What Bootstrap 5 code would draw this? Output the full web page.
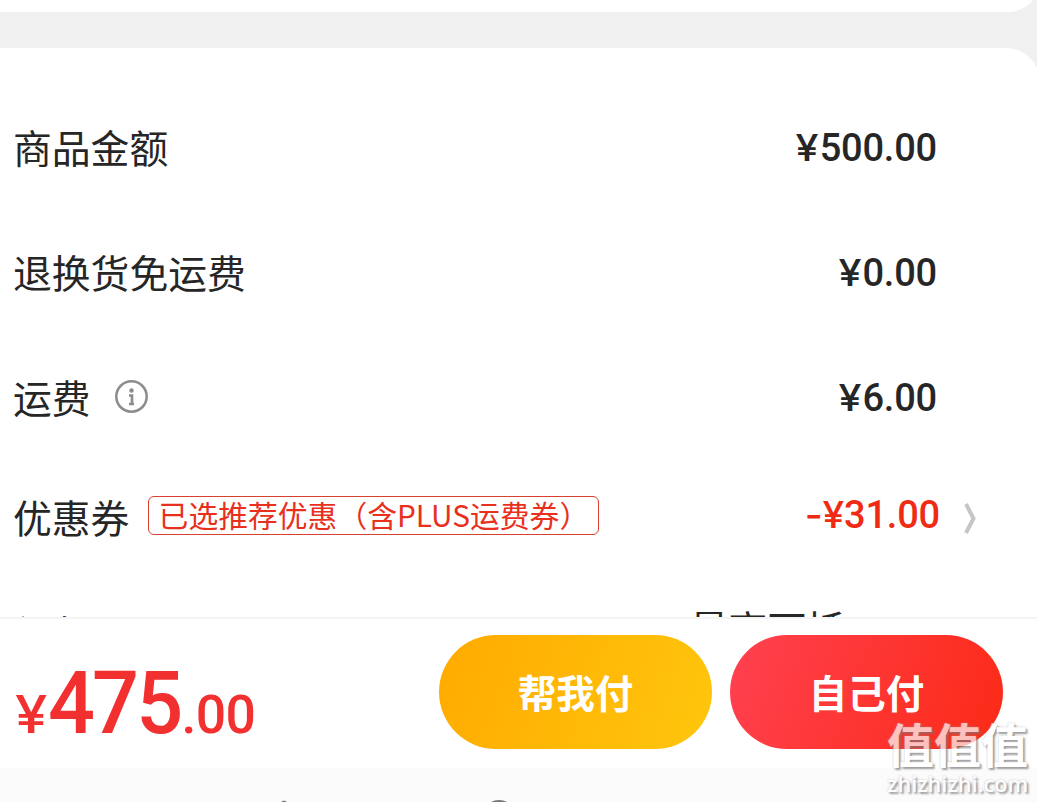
<!DOCTYPE html>
<html lang="zh-CN">
  <head>
    <meta charset="UTF-8" />
    <meta name="viewport" content="width=device-width, initial-scale=1.0" />
    <title>结算</title>
    <link
      href="https://cdn.jsdelivr.net/npm/bootstrap@5.3.0/dist/css/bootstrap.min.css"
      rel="stylesheet"
    />
    <style>
      body {
        height: 802px;
        background: #f0f0f0;
        color: #262626;
        font-family: "Noto Sans CJK SC", sans-serif;
        font-size: 38.8px;
        line-height: 1;
      }
      .panel-prev {
        height: 48px;
        margin: -36px -3px 36px 0;
        border-bottom-right-radius: 32px;
      }
      .panel-bill {
        height: 569px;
        margin-right: -3px;
        padding: 38px 103px 0 13px;
        border-top-right-radius: 34px;
      }
      .bill-row {
        height: 125px;
      }
      .bill-row.coupon {
        height: 114px;
      }
      .bill-row.packet {
        height: 114px;
        padding-top: 36px;
      }
      .bill-label {
        margin-top: -4px;
      }
      .amount {
        font-family: Roboto, "Noto Sans CJK SC", sans-serif;
        font-size: 38px;
        font-weight: 500;
        letter-spacing: -0.2px;
        margin-top: -1px;
      }
      .yen {
        display: inline-block;
        font-family: Inter, sans-serif;
        font-size: 0.97em;
        transform: scaleX(1.12);
        transform-origin: right;
        margin-right: 1px;
      }
      .info-icon {
        margin-left: 23px;
        margin-top: -4px;
      }
      .coupon-tag {
        height: 39px;
        width: 451px;
        margin-left: 19px;
        margin-top: -5px;
        padding: 0 0 2px 0;
        border: 1px solid #d8402f;
        border-radius: 6px;
        color: #e8301c;
        font-size: 29.8px;
      }
      .amount-off {
        color: #f02b14;
        margin-top: -6px;
      }
      .amount-off .yen {
        transform: scaleX(1.06);
        margin-right: 0;
      }
      .chevron {
        margin-right: -43px;
        margin-left: 20px;
      }
      .packet-label {
        margin-top: 2px;
      }
      .packet-value {
        margin-right: 92px;
        margin-top: -3px;
      }
      .pay-bar {
        height: 151px;
        padding: 16px 34px 0 15px;
        border-top: 2px solid #f4f4f4;
      }
      .total {
        color: #f23030;
        font-family: Roboto, sans-serif;
        font-size: 53.5px;
        font-weight: 500;
        letter-spacing: -0.7px;
        padding-top: 25px;
      }
      .total .yen {
        transform-origin: left;
        margin-right: 5px;
      }
      .total-int {
        display: inline-block;
        font-size: 87px;
        letter-spacing: -3px;
        transform: scaleX(0.95);
        transform-origin: left;
        margin-right: -6px;
      }
      .pay-actions {
        gap: 18px;
      }
      .pay-btn {
        width: 273px;
        height: 114px;
        padding: 0 0 2px 0;
        border: 0;
        color: #fff;
        font-size: 38.5px;
        font-weight: 700;
        line-height: 1;
      }
      .pay-btn:hover {
        color: #fff;
      }
      .pay-friend {
        background: linear-gradient(110deg, #ffaa00, #ffc60d);
      }
      .pay-self {
        background: linear-gradient(110deg, #ff4150, #fc2a16);
      }
      .nav-strip {
        height: 34px;
        background: #fbfbfb;
      }
      .site-stamp {
        right: 8px;
        bottom: 7px;
        width: 142px;
        color: #fff;
        opacity: 0.7;
        text-shadow: 2px 2px 2px #777, 0 0 2px #aaa;
      }
      .stamp-name {
        margin-bottom: 7px;
        font-size: 47px;
        font-weight: 700;
      }
      .stamp-url {
        font-family: "Open Sans", sans-serif;
        font-size: 21.7px;
        font-weight: 600;
      }
    </style>
  </head>
  <body class="overflow-hidden position-relative d-flex flex-column">
    <section class="panel-prev bg-white flex-shrink-0"></section>

    <main class="panel-bill bg-white overflow-hidden flex-shrink-0">
      <div class="bill-row d-flex align-items-center justify-content-between">
        <span class="bill-label">商品金额</span>
        <span class="amount"><span class="yen">¥</span>500.00</span>
      </div>
      <div class="bill-row d-flex align-items-center justify-content-between">
        <span class="bill-label">退换货免运费</span>
        <span class="amount"><span class="yen">¥</span>0.00</span>
      </div>
      <div class="bill-row d-flex align-items-center">
        <span class="bill-label">运费</span>
        <svg class="info-icon" width="36" height="36" viewBox="0 0 36 36" fill="none" stroke="#8c8c8c">
          <circle cx="17.5" cy="17.5" r="15.2" stroke-width="2.5" />
          <circle cx="17.5" cy="11.5" r="2.2" fill="#8c8c8c" stroke="none" />
          <path d="M15 16.5H18V25M15 25H20" stroke-width="2.6" />
        </svg>
        <span class="amount ms-auto"><span class="yen">¥</span>6.00</span>
      </div>
      <div class="bill-row coupon d-flex align-items-center">
        <span class="bill-label">优惠券</span>
        <span class="coupon-tag d-flex align-items-center justify-content-center text-nowrap">已选推荐优惠（含PLUS运费券）</span>
        <span class="amount amount-off ms-auto"><span class="yen">-¥</span>31.00</span>
        <svg class="chevron" width="20" height="34" viewBox="0 0 20 34" fill="none" stroke="#c6c6c6" stroke-width="4">
          <path d="M6 3L13.5 17.5L6 32" />
        </svg>
      </div>
      <div class="bill-row packet d-flex justify-content-between">
        <span class="packet-label">红包</span>
        <span class="packet-value">最高可抵</span>
      </div>
    </main>

    <div class="pay-bar bg-white d-flex align-items-start flex-shrink-0">
      <div class="total text-nowrap"><span class="yen">¥</span><span class="total-int">475</span>.00</div>
      <div class="d-flex ms-auto pay-actions">
        <button type="button" class="btn rounded-pill pay-btn pay-friend">帮我付</button>
        <button type="button" class="btn rounded-pill pay-btn pay-self">自己付</button>
      </div>
    </div>

    <!-- system navigation keys, only their top edges are in view -->
    <footer class="nav-strip flex-shrink-0">
      <svg class="d-block" width="1037" height="34" fill="none" stroke="#777" stroke-width="2">
        <path d="M281 35L284 33.5L287 35" />
        <circle cx="499" cy="49" r="16" />
      </svg>
    </footer>

    <div class="site-stamp position-absolute text-nowrap">
      <div class="stamp-name">值值值</div>
      <div class="stamp-url">zhizhizhi.com</div>
    </div>

    <script src="https://cdn.jsdelivr.net/npm/bootstrap@5.3.0/dist/js/bootstrap.bundle.min.js"></script>
  </body>
</html>
